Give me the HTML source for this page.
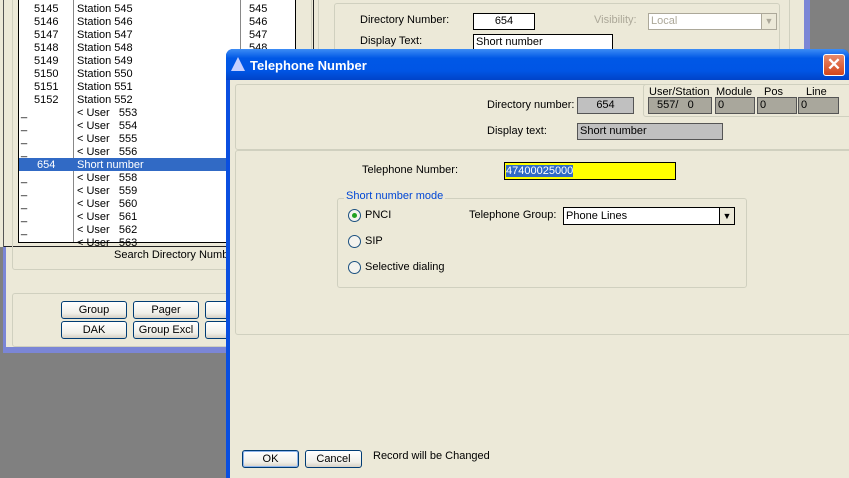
<!DOCTYPE html>
<html><head><style>
*{box-sizing:border-box;margin:0;padding:0}
body{width:849px;height:478px;overflow:hidden;background:#808080;position:relative;font-family:"Liberation Sans",sans-serif;font-size:11px;color:#000}
.a{position:absolute}
.t{position:absolute;white-space:nowrap;line-height:13px}
.btn{position:absolute;height:18px;border:1px solid #003c74;border-radius:3px;background:linear-gradient(#fff,#f0efe8 70%,#d6d0c5);text-align:center;line-height:16px}
.gb{position:absolute;border:1px solid #d0d0bf;border-radius:3px}
</style></head><body>
<div class="a" style="left:3px;top:0;width:807px;height:353px;background:#7b86d6"></div>
<div class="a" style="left:6px;top:0;width:798px;height:347px;background:#ece9d8"></div>
<div class="a" style="left:0;top:0;width:314px;height:247px;border-right:1px solid #222;border-bottom:1px solid #222;background:#ece9d8"></div>
<div class="a" style="left:0;top:0;width:4px;height:247px;background:#ece9d8;border-right:1px solid #555"></div>
<div class="a" style="left:18px;top:0;width:278px;height:243px;background:#fff;border:1px solid #000;border-top:none;overflow:hidden">
<div class="a" style="left:54px;top:0;width:1px;height:243px;background:#888"></div>
<div class="a" style="left:221px;top:0;width:1px;height:243px;background:#888"></div>
<div class="a" style="left:0;top:158px;width:222px;height:13px;background:#316ac5"></div>
</div>
<div class="a" style="left:18px;top:0;width:280px;height:245px;font-size:11px">
<div class="t" style="left:16px;top:3px">5145<br>5146<br>5147<br>5148<br>5149<br>5150<br>5151<br>5152</div>
<div class="t" style="left:59px;top:3px">Station 545<br>Station 546<br>Station 547<br>Station 548<br>Station 549<br>Station 550<br>Station 551<br>Station 552<br>&lt; User &nbsp;&nbsp;553<br>&lt; User &nbsp;&nbsp;554<br>&lt; User &nbsp;&nbsp;555<br>&lt; User &nbsp;&nbsp;556<br><span style="color:#fff">Short number</span><br>&lt; User &nbsp;&nbsp;558<br>&lt; User &nbsp;&nbsp;559<br>&lt; User &nbsp;&nbsp;560<br>&lt; User &nbsp;&nbsp;561<br>&lt; User &nbsp;&nbsp;562<br>&lt; User &nbsp;&nbsp;563</div>
<div class="t" style="left:3px;top:107px">_<br>_<br>_<br>_</div>
<div class="t" style="left:19px;top:159px;color:#fff">654</div>
<div class="t" style="left:3px;top:172px">_<br>_<br>_<br>_<br>_</div>
<div class="t" style="left:231px;top:3px">545<br>546<br>547<br>548</div>
</div>
<div class="gb" style="left:12px;top:-5px;width:300px;height:275px"></div>
<div class="t" style="left:114px;top:249px">Search Directory Number</div>
<div class="gb" style="left:12px;top:293px;width:300px;height:54px"></div>
<div class="btn" style="left:61px;top:301px;width:66px">Group</div>
<div class="btn" style="left:133px;top:301px;width:66px">Pager</div>
<div class="btn" style="left:205px;top:301px;width:66px">B</div>
<div class="btn" style="left:61px;top:321px;width:66px">DAK</div>
<div class="btn" style="left:133px;top:321px;width:66px">Group Excl</div>
<div class="btn" style="left:205px;top:321px;width:66px">F</div>
<div class="gb" style="left:318px;top:-5px;width:472px;height:350px"></div>
<div class="gb" style="left:334px;top:3px;width:446px;height:60px"></div>
<div class="t" style="left:360px;top:14px">Directory Number:</div>
<div class="a" style="left:473px;top:13px;width:62px;height:17px;border:1px solid #000;background:#fff;text-align:center;line-height:15px">654</div>
<div class="t" style="left:594px;top:14px;color:#aca899">Visibility:</div>
<div class="a" style="left:648px;top:13px;width:129px;height:17px;border:1px solid #aca899;background:#fff;color:#aca899;padding-left:2px;line-height:15px">Local<span class="a" style="right:0;top:0;width:15px;height:15px;border-left:1px solid #aca899;background:#ece9d8;font-size:9px;text-align:center">▼</span></div>
<div class="t" style="left:360px;top:35px">Display Text:</div>
<div class="a" style="left:473px;top:34px;width:140px;height:17px;border:1px solid #000;background:#fff;padding-left:2px;line-height:15px">Short number</div>
<div class="a" style="left:226px;top:49px;width:623px;height:429px;background:#0a4fe0;border-radius:7px 7px 0 0"></div>
<div class="a" style="left:226px;top:49px;width:623px;height:31px;border-radius:7px 7px 0 0;background:linear-gradient(#3d8df5,#0058e6 30%,#0055e5 70%,#0043c8)"></div>
<div class="a" style="left:231px;top:57px;width:0;height:0;border-left:7px solid transparent;border-right:7px solid transparent;border-bottom:14px solid #c7d0ff"></div>
<div class="t" style="left:250px;top:58px;color:#fff;font-weight:bold;font-size:13px;line-height:15px">Telephone Number</div>
<div class="a" style="left:823px;top:54px;width:22px;height:22px;border:1px solid #fff;border-radius:3px;background:linear-gradient(#e88a6a,#d2461c);color:#fff;text-align:center;font-size:17px;line-height:19px;font-weight:bold">✕</div>
<div class="a" style="left:230px;top:80px;width:619px;height:398px;background:#ece9d8"></div>
<div class="gb" style="left:235px;top:84px;width:620px;height:66px"></div>
<div class="gb" style="left:643px;top:84px;width:210px;height:33px"></div>
<div class="t" style="left:649px;top:86px">User/Station</div>
<div class="t" style="left:716px;top:86px">Module</div>
<div class="t" style="left:764px;top:86px">Pos</div>
<div class="t" style="left:806px;top:86px">Line</div>
<div class="t" style="left:487px;top:99px">Directory number:</div>
<div class="a" style="left:577px;top:97px;width:57px;height:17px;border:1px solid #555;background:#c0c0c0;text-align:center;line-height:15px">654</div>
<div class="a" style="left:648px;top:97px;width:64px;height:17px;border:1px solid #555;background:#a9a79c;line-height:15px;padding-left:8px">557/ &nbsp;&nbsp;0</div>
<div class="a" style="left:715px;top:97px;width:40px;height:17px;border:1px solid #555;background:#a9a79c;line-height:15px;padding-left:2px">0</div>
<div class="a" style="left:757px;top:97px;width:40px;height:17px;border:1px solid #555;background:#a9a79c;line-height:15px;padding-left:2px">0</div>
<div class="a" style="left:798px;top:97px;width:41px;height:17px;border:1px solid #555;background:#a9a79c;line-height:15px;padding-left:2px">0</div>
<div class="t" style="left:487px;top:125px">Display text:</div>
<div class="a" style="left:577px;top:123px;width:146px;height:17px;border:1px solid #555;background:#c0c0c0;line-height:15px;padding-left:2px">Short number</div>
<div class="gb" style="left:235px;top:150px;width:620px;height:185px"></div>
<div class="t" style="left:362px;top:164px">Telephone Number:</div>
<div class="a" style="left:504px;top:162px;width:172px;height:18px;border:1px solid #000;background:#ff0;line-height:16px;padding-left:1px"><span style="background:#316ac5;color:#fff">47400025000</span></div>
<div class="gb" style="left:337px;top:198px;width:410px;height:90px"></div>
<div class="t" style="left:344px;top:190px;background:#ece9d8;color:#0046d5;padding:0 2px">Short number mode</div>
<div class="a" style="left:348px;top:209px;width:13px;height:13px;border:1px solid #1c5180;border-radius:50%;background:#f4f3ee"><div class="a" style="left:3px;top:3px;width:5px;height:5px;border-radius:50%;background:#21a121"></div></div>
<div class="t" style="left:365px;top:209px">PNCI</div>
<div class="a" style="left:348px;top:235px;width:13px;height:13px;border:1px solid #1c5180;border-radius:50%;background:#f4f3ee"></div>
<div class="t" style="left:365px;top:235px">SIP</div>
<div class="a" style="left:348px;top:261px;width:13px;height:13px;border:1px solid #1c5180;border-radius:50%;background:#f4f3ee"></div>
<div class="t" style="left:365px;top:261px">Selective dialing</div>
<div class="t" style="left:469px;top:209px">Telephone Group:</div>
<div class="a" style="left:563px;top:207px;width:172px;height:18px;border:1px solid #000;background:#fff;line-height:16px;padding-left:2px">Phone Lines<div class="a" style="right:0;top:0;width:15px;height:16px;border-left:1px solid #000;background:#ece9d8;font-size:9px;text-align:center">▼</div></div>
<div class="btn" style="left:242px;top:450px;width:57px;border-color:#003c74;box-shadow:inset 0 0 0 1px #8eb4ec">OK</div>
<div class="btn" style="left:305px;top:450px;width:57px">Cancel</div>
<div class="t" style="left:373px;top:450px">Record will be Changed</div>
</body></html>
